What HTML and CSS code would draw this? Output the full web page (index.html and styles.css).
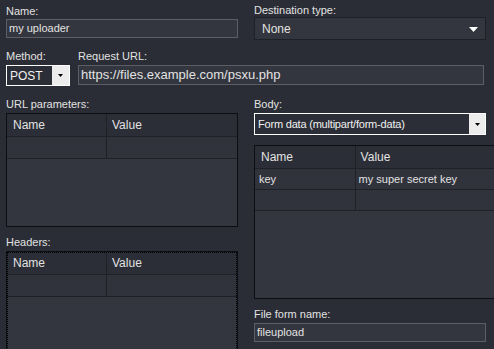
FILE: index.html
```html
<!DOCTYPE html>
<html>
<head>
<meta charset="utf-8">
<link rel="stylesheet" href="styles.css">
</head>
<body>
<div class="page">
  <div class="row1">
    <div class="col">
      <div class="lbl">Name:</div>
      <div class="textbox">my uploader</div>
    </div>
    <div class="col">
      <div class="lbl lbl-up">Destination type:</div>
      <div class="combo">
        <span>None</span>
        <svg class="arrow-w" width="9" height="5" viewBox="0 0 9 5"><path d="M0 0h9L4.5 5z" fill="#fff"/></svg>
      </div>
    </div>
  </div>

  <div class="row2">
    <div class="method">
      <div class="lbl">Method:</div>
      <div class="select small">
        <span class="sel-text">POST</span>
        <span class="btn"><svg width="5" height="3" viewBox="0 0 5 3"><path d="M0 0h5L2.5 3z" fill="#000"/></svg></span>
      </div>
    </div>
    <div class="url">
      <div class="lbl">Request URL:</div>
      <div class="textbox tall">https://files.example.com/psxu.php</div>
    </div>
  </div>

  <div class="row3">
    <div class="col">
      <div class="lbl">URL parameters:</div>
      <div class="grid g-params">
        <div class="ghead"><div class="c1">Name</div><div class="c2">Value</div></div>
        <div class="grow"><div class="c1"></div><div class="c2"></div></div>
      </div>
      <div class="lbl lbl-gap">Headers:</div>
      <div class="grid g-headers focus">
        <div class="ghead"><div class="c1">Name</div><div class="c2">Value</div></div>
        <div class="grow"><div class="c1"></div><div class="c2"></div></div>
      </div>
    </div>
    <div class="col">
      <div class="lbl">Body:</div>
      <div class="select wide">
        <span class="sel-text">Form data (multipart/form-data)</span>
        <span class="btn"><svg width="5" height="3" viewBox="0 0 5 3"><path d="M0 0h5L2.5 3z" fill="#000"/></svg></span>
      </div>
      <div class="grid g-body">
        <div class="ghead"><div class="c1">Name</div><div class="c2">Value</div></div>
        <div class="grow"><div class="c1">key</div><div class="c2">my super secret key</div></div>
        <div class="grow"><div class="c1"></div><div class="c2"></div></div>
      </div>
      <div class="lbl lbl-gap2">File form name:</div>
      <div class="textbox">fileupload</div>
    </div>
  </div>
</div>
</body>
</html>
```
FILE: styles.css
```css
html, body {
  margin: 0;
  padding: 0;
  background: #2a2d35;
  overflow: hidden;
  width: 494px;
  height: 349px;
}
.page {
  padding: 5px 0 0 6px;
  font-family: "Liberation Sans", Arial, sans-serif;
  font-size: 11px;
  color: #e2e2e2;
}
.row1, .row3 {
  display: grid;
  grid-template-columns: 232px 232px;
  column-gap: 16px;
}
.row1 { height: 36px; }
.lbl {
  height: 14px;
  line-height: 13px;
  white-space: nowrap;
}
.lbl-up { height: 13px; margin-top: -1px; }
.textbox {
  box-sizing: border-box;
  height: 19px;
  border: 1px solid #5b5e64;
  background: #33363e;
  line-height: 17px;
  padding-left: 2px;
  white-space: nowrap;
}
.textbox.tall { height: 20px; line-height: 18px; font-size: 13px; padding-left: 2px; }
.combo {
  box-sizing: border-box;
  height: 23px;
  border: 1px solid #1d2027;
  background: #33363e;
  display: flex;
  align-items: center;
  justify-content: space-between;
  padding: 0 7px 0 7px;
  font-size: 12px;
}
.arrow-w { margin-top: 1px; }
.row2 {
  margin-top: 9px;
  display: flex;
  gap: 8px;
}
.row2 .lbl { height: 15px; line-height: 13px; }
.method { width: 64px; }
.url { width: 406px; }
.select {
  box-sizing: border-box;
  border: 1px solid #ffffff;
  background: #2b2e36;
  display: flex;
  align-items: stretch;
}
.select.small { height: 21px; width: 64px; }
.select.wide { height: 22px; width: 232px; }
.sel-text {
  flex: 1;
  display: flex;
  align-items: center;
  padding-left: 3px;
  white-space: nowrap;
  color: #f0f0f0;
}
.select.small .sel-text { font-size: 12px; padding-left: 3px; }
.select.wide .sel-text { letter-spacing: -0.2px; }
.btn {
  width: 17px;
  background: #ececec;
  display: flex;
  align-items: center;
  justify-content: center;
}
.select.wide .btn { width: 16px; }
.row3 { margin-top: 12px; }
.row3 .lbl { height: 15px; line-height: 13px; }
.lbl-gap { margin-top: 9px; }
.lbl-gap2 { margin-top: 9px; }
.grid {
  box-sizing: border-box;
  border: 1px solid #0d0e11;
  background: #33363e;
  font-size: 12px;
  overflow: hidden;
}
.g-params { height: 114px; }
.g-headers { height: 110px; outline: 1px dotted #000; outline-offset: -2px; }
.g-body { height: 154px; width: 252px; margin-top: 10px; font-size: 11px; }
.ghead, .grow {
  display: flex;
  border-bottom: 1px solid #1f2127;
}
.ghead { height: 22px; background: #2b2e36; align-items: center; }
.grow { height: 21px; background: #30333b; }
.c1 {
  width: 100px;
  border-right: 1px solid #1f2127;
  height: 100%;
  box-sizing: border-box;
  display: flex;
  align-items: center;
  padding-left: 6px;
}
.c2 {
  width: 128px;
  height: 100%;
  box-sizing: border-box;
  display: flex;
  align-items: center;
  padding-left: 5px;
}
.g-body .c1 { width: 101px; padding-left: 4px; }
.g-body .c2 { width: 150px; padding-left: 3px; }
.g-body .ghead { height: 22px; font-size: 12px; }
.g-body .ghead .c1 { padding-left: 6px; }
.g-body .ghead .c2 { padding-left: 5px; }
.g-body .grow { height: 20px; }
```
